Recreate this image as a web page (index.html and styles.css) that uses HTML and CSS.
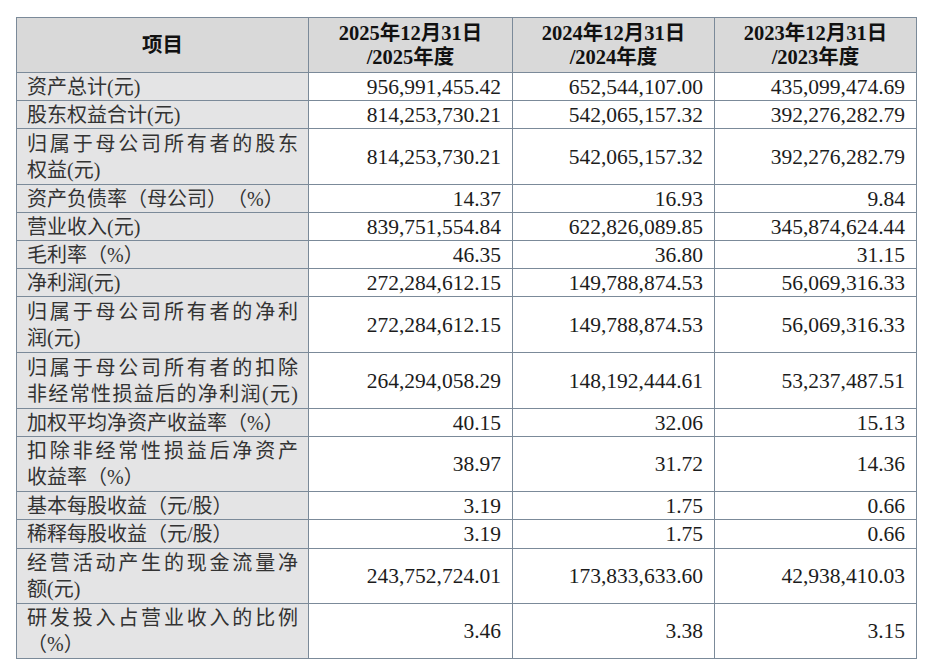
FILE: index.html
```html
<!DOCTYPE html>
<html lang="zh-CN">
<head>
<meta charset="utf-8">
<title>主要财务数据</title>
<link rel="stylesheet" href="styles.css">
</head>
<body>
<table class="fin">
  <colgroup>
    <col class="c1"><col class="c2"><col class="c3"><col class="c4">
  </colgroup>
  <thead>
    <tr class="head">
      <th>项目</th>
      <th>2025年12月31日<br>/2025年度</th>
      <th>2024年12月31日<br>/2024年度</th>
      <th>2023年12月31日<br>/2023年度</th>
    </tr>
  </thead>
  <tbody>
    <tr><td class="label">资产总计(元)</td><td>956,991,455.42</td><td>652,544,107.00</td><td>435,099,474.69</td></tr>
    <tr><td class="label">股东权益合计(元)</td><td>814,253,730.21</td><td>542,065,157.32</td><td>392,276,282.79</td></tr>
    <tr class="dbl"><td class="label"><span class="jl">归属于母公司所有者的股东</span>权益(元)</td><td>814,253,730.21</td><td>542,065,157.32</td><td>392,276,282.79</td></tr>
    <tr><td class="label">资产负债率（母公司）（%）</td><td>14.37</td><td>16.93</td><td>9.84</td></tr>
    <tr><td class="label">营业收入(元)</td><td>839,751,554.84</td><td>622,826,089.85</td><td>345,874,624.44</td></tr>
    <tr><td class="label">毛利率（%）</td><td>46.35</td><td>36.80</td><td>31.15</td></tr>
    <tr><td class="label">净利润(元)</td><td>272,284,612.15</td><td>149,788,874.53</td><td>56,069,316.33</td></tr>
    <tr class="dbl"><td class="label"><span class="jl">归属于母公司所有者的净利</span>润(元)</td><td>272,284,612.15</td><td>149,788,874.53</td><td>56,069,316.33</td></tr>
    <tr class="dbl"><td class="label"><span class="jl">归属于母公司所有者的扣除</span><span class="jl">非经常性损益后的净利润(元)</span></td><td>264,294,058.29</td><td>148,192,444.61</td><td>53,237,487.51</td></tr>
    <tr><td class="label">加权平均净资产收益率（%）</td><td>40.15</td><td>32.06</td><td>15.13</td></tr>
    <tr class="dbl short"><td class="label"><span class="jl">扣除非经常性损益后净资产</span>收益率（%）</td><td>38.97</td><td>31.72</td><td>14.36</td></tr>
    <tr><td class="label">基本每股收益（元/股）</td><td>3.19</td><td>1.75</td><td>0.66</td></tr>
    <tr class="tall"><td class="label">稀释每股收益（元/股）</td><td>3.19</td><td>1.75</td><td>0.66</td></tr>
    <tr class="dbl short"><td class="label"><span class="jl">经营活动产生的现金流量净</span>额(元)</td><td>243,752,724.01</td><td>173,833,633.60</td><td>42,938,410.03</td></tr>
    <tr class="dbl short"><td class="label"><span class="jl">研发投入占营业收入的比例</span>（%）</td><td>3.46</td><td>3.38</td><td>3.15</td></tr>
  </tbody>
</table>
</body>
</html>
```

FILE: styles.css
```css
html, body {
  margin: 0;
  background: #ffffff;
}

body {
  padding: 17px 0 0 16px;
  font-family: "Liberation Serif", "Noto Sans CJK SC", serif;
  color: #1c1c1c;
  text-spacing-trim: space-all;
}

.fin {
  border-collapse: collapse;
  table-layout: fixed;
  width: 900px;
  border: 1px solid #6e7e8f;
}

.c1 { width: 292px; }
.c2 { width: 204px; }
.c3 { width: 202px; }
.c4 { width: 202px; }

.fin th,
.fin td {
  border: 1px solid #7b8a99;
  box-sizing: border-box;
  padding: 0 11px 0 10px;
  overflow: hidden;
}

.head th {
  height: 55px;
  background: #d9d9d9;
  font-weight: bold;
  font-size: 20.5px;
  line-height: 24px;
  text-align: center;
  color: #111;
  padding: 0 4px;
}

.fin td {
  height: 28px;
  font-size: 21.5px;
  line-height: 26px;
  text-align: right;
  vertical-align: middle;
  white-space: nowrap;
}

.fin td.label {
  background: #e4e4e5;
  text-align: left;
  font-size: 20px;
  line-height: 26px;
  color: #333;
  white-space: normal;
  padding: 0 10px 0 10px;
}

.jl {
  display: block;
  text-align: justify;
  text-align-last: justify;
}

.dbl td { height: 56px; }
.dbl.short td { height: 55px; }
.tall td { height: 29px; }
```
